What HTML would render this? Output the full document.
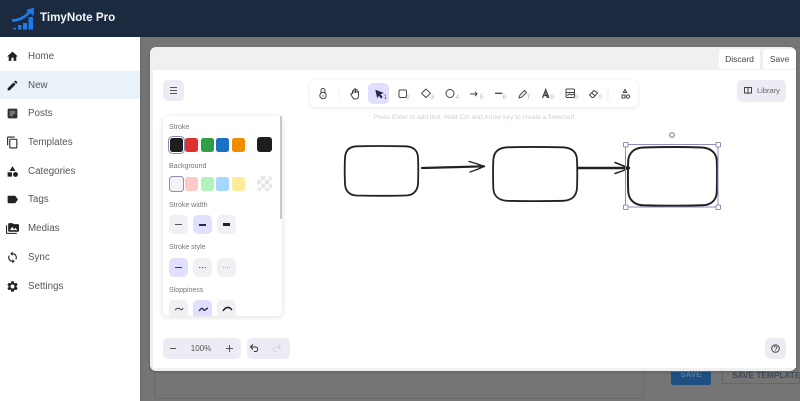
<!DOCTYPE html>
<html>
<head>
<meta charset="utf-8">
<style>
html,body{margin:0;padding:0;width:800px;height:401px;overflow:hidden;background:#757575;font-family:"Liberation Sans",sans-serif}
body{filter:blur(.3px)}
.a{position:absolute}
#hdr{left:0;top:0;width:800px;height:37px;background:#1c2a3f;z-index:5}
#hdr .t{position:absolute;left:40px;top:9px;font-size:11.6px;font-weight:bold;color:#f2f5f9;line-height:18px;white-space:nowrap}
#side{left:0;top:37px;width:140px;height:364px;background:#fff;z-index:4}
.nav{position:absolute;left:28px;font-size:9.8px;color:#555;line-height:14px}
.ic{position:absolute;left:6px;width:13px;height:13px}
#active{left:0;top:71px;width:140px;height:28px;background:#eaf2fa}
#modal{left:150px;top:47px;width:646px;height:324px;background:#f0f0f0;border-radius:6px;z-index:3;box-shadow:0 1px 3px rgba(0,0,0,.2)}
#canvas{left:153px;top:70px;width:643px;height:298px;background:#fff;z-index:3}
.btn{position:absolute;background:#fff;border-radius:3px;font-size:8.5px;color:#444;text-align:center;line-height:20px;height:20px;top:49px;z-index:4}
.g{position:absolute;background:#ececf4;border-radius:5px;z-index:4}
#toolbar{left:310px;top:80px;width:328px;height:27px;background:#fff;border-radius:6px;box-shadow:0 1px 5px rgba(0,0,0,.1);z-index:4}
#tsel{left:368px;top:83px;width:21px;height:21px;background:#e0dffe;border-radius:5px;z-index:5}
.s{position:absolute;z-index:6;overflow:visible}
.num{position:absolute;font-size:6.5px;color:#b8b8b8;z-index:6;line-height:8px;top:94px}
#hint{left:300px;top:113px;width:348px;text-align:center;font-size:6.6px;color:#cfcfcf;line-height:10px;z-index:4}
#panel{left:163px;top:116px;width:119px;height:200px;background:#fff;border-radius:5px;box-shadow:0 1px 6px rgba(0,0,0,.14);z-index:4;overflow:hidden}
.lbl{position:absolute;left:6px;font-size:7px;color:#777;line-height:10px}
.sw{position:absolute;width:13px;height:14px;border-radius:2.5px}
.bx{position:absolute;width:19px;height:19px;border-radius:5px;background:#f1f0f5}
.bx.on{background:#e0dffe}
.bx i{position:absolute;left:6px;top:9px;width:7px;height:1px;background:#555}
#thumb{left:280px;top:116px;width:2px;height:103px;background:#c8c8cc;z-index:5}
</style>
</head>
<body>
<!-- background page hints -->
<div class="a" style="left:154px;top:372px;width:488px;height:26px;border:1px solid #6a6a6a;border-top:none;z-index:1"></div>
<div class="a" style="left:671px;top:372px;width:40px;height:13px;background:#1f4f82;border-radius:0 0 2px 2px;z-index:1;color:#5b7ea3;font-size:8px;font-weight:bold;text-align:center;line-height:6px">SAVE</div>
<div class="a" style="left:722px;top:372px;width:78px;height:12px;border:1px solid #666;border-top:none;z-index:1;color:#3f4a55;font-size:8.300px;font-weight:bold;line-height:6px;white-space:nowrap;padding-left:9px;box-sizing:border-box;overflow:hidden">SAVE TEMPLATE</div>

<div id="hdr" class="a">
<svg class="a" style="left:11px;top:6px" width="24" height="25" viewBox="0 0 24 25">
<path d="M1 14.500C8 14.500 15 11 19 5" fill="none" stroke="#1e7ae8" stroke-width="2.800"/>
<path d="M15 4 L23 1.500 L22.500 10Z" fill="#1e7ae8"/>
<rect x="2" y="22" width="3" height="1.500" fill="#1e7ae8"/><rect x="7" y="19" width="3.500" height="4.500" fill="#1e7ae8"/><rect x="12" y="17" width="4" height="6.500" fill="#1e7ae8"/><rect x="17.500" y="11" width="4.500" height="12.500" fill="#1e7ae8"/>
</svg>
<div class="t">TimyNote Pro</div>
</div>

<div id="side" class="a" style="box-shadow:0 0 3px rgba(0,0,0,.2)"></div>
<div id="active" class="a" style="z-index:4"></div>
<div class="a" style="left:0;top:0;z-index:5">
<div class="nav" style="top:50px">Home</div>
<div class="nav" style="top:79px">New</div>
<div class="nav" style="top:107px">Posts</div>
<div class="nav" style="top:136px">Templates</div>
<div class="nav" style="top:165px">Categories</div>
<div class="nav" style="top:193px">Tags</div>
<div class="nav" style="top:222px">Medias</div>
<div class="nav" style="top:251px">Sync</div>
<div class="nav" style="top:280px">Settings</div>
<svg class="ic" style="top:50px" viewBox="0 0 24 24"><path fill="#222" d="M10 20v-6h4v6h5v-8h3L12 3 2 12h3v8z"/></svg>
<svg class="ic" style="top:79px" viewBox="0 0 24 24"><path fill="#222" d="M3 17.25V21h3.75L17.8 9.94l-3.75-3.75L3 17.25zM20.7 7.04a1 1 0 000-1.41l-2.34-2.34a1 1 0 00-1.41 0l-1.83 1.83 3.75 3.75 1.83-1.83z"/></svg>
<svg class="ic" style="top:107px" viewBox="0 0 24 24"><path fill="#333" d="M19 3H5a2 2 0 00-2 2v14a2 2 0 002 2h14a2 2 0 002-2V5a2 2 0 00-2-2z"/><path fill="#777" d="M7 7h10v6h-4v4H7z"/></svg>
<svg class="ic" style="top:136px" viewBox="0 0 24 24"><path fill="#222" d="M16 1H4a2 2 0 00-2 2v14h2V3h12V1zm3 4H8a2 2 0 00-2 2v14a2 2 0 002 2h11a2 2 0 002-2V7a2 2 0 00-2-2zm0 16H8V7h11v14z"/></svg>
<svg class="ic" style="top:165px" viewBox="0 0 24 24"><path fill="#222" d="M12 2l-5.500 9h11z"/><circle cx="17.500" cy="17.500" r="4.500" fill="#222"/><path fill="#222" d="M3 13.500h8v8H3z"/></svg>
<svg class="ic" style="top:193px" viewBox="0 0 24 24"><path fill="#222" d="M17.630 5.840A2 2 0 0016 5H5a2 2 0 00-2 2v10a2 2 0 002 2h11a2 2 0 001.630-.840L22 12z"/></svg>
<svg class="ic" style="top:222px" viewBox="0 0 24 24"><path fill="#222" d="M2 6H0v14a2 2 0 002 2h18v-2H2V6zm20-2h-8l-2-2H6a2 2 0 00-2 2v12a2 2 0 002 2h16a2 2 0 002-2V6a2 2 0 00-2-2zM7 15l4.500-6 3.500 4.500 2.500-3L21 15H7z"/></svg>
<svg class="ic" style="top:251px" viewBox="0 0 24 24"><path fill="#222" d="M12 4V1L8 5l4 4V6a6 6 0 016 6c0 1-.25 2-.7 2.800l1.460 1.460A8 8 0 0012 4zm0 14a6 6 0 01-6-6c0-1 .25-2 .7-2.800L5.240 7.740A8 8 0 0012 20v3l4-4-4-4v3z"/></svg>
<svg class="ic" style="top:280px" viewBox="0 0 24 24"><path fill="#222" d="M19.140 12.940a7.500 7.500 0 000-1.880l2.030-1.580a.5.5 0 00.12-.61l-1.920-3.320a.5.5 0 00-.59-.22l-2.390.96a7 7 0 00-1.620-.94l-.36-2.540a.5.5 0 00-.48-.41h-3.840a.5.5 0 00-.47.41l-.36 2.540a7 7 0 00-1.630.94l-2.390-.96a.5.5 0 00-.58.22L2.740 8.870a.5.5 0 00.12.61l2.030 1.580a7.500 7.500 0 000 1.880l-2.030 1.580a.5.5 0 00-.12.61l1.920 3.320c.12.22.37.29.59.22l2.390-.96c.5.38 1.030.7 1.620.94l.36 2.540c.05.24.24.41.48.41h3.840c.24 0 .44-.17.47-.41l.36-2.540a7 7 0 001.620-.94l2.390.96c.22.08.47 0 .59-.22l1.920-3.320a.5.5 0 00-.12-.61zM12 15.600a3.600 3.600 0 110-7.200 3.600 3.600 0 010 7.200z"/></svg>
</div>

<div id="modal" class="a"></div>
<div id="canvas" class="a"></div>
<div class="btn" style="left:719px;width:41px">Discard</div>
<div class="btn" style="left:763px;width:33px">Save</div>

<!-- menu -->
<div class="g" style="left:163px;top:80px;width:21px;height:21px"></div>
<svg class="s" style="left:163px;top:80px" width="21" height="21"><path d="M7 7.500h7M7 10.500h7M7 13.500h7" stroke="#555" stroke-width="1"/></svg>

<!-- toolbar -->
<div id="toolbar" class="a"></div>
<div id="tsel" class="a"></div>
<svg class="s" style="left:310px;top:80px" width="328" height="27" fill="none" stroke="#444" stroke-width="1">
<!-- lock -->
<circle cx="13" cy="15.500" r="3.200"/><path d="M11 12.500V10.500a2 2 0 014 0v2M13 15v1.500"/>
<path d="M29 8v12M298 8v12" stroke="#efefef"/>
<!-- hand -->
<path d="M42.500 14V11a.8.8 0 011.500 0v2M44 13V9.300a.8.8 0 011.500 0V13M45.500 13V9.800a.8.8 0 011.500 0v3.200M47 13v-1.500a.8.8 0 011.500 0V16c0 2-1.200 3-3 3s-2.500-.7-3.200-2L41 14.500c-.5-1 .7-1.600 1.500-.5" fill="#fff"/>
<!-- pointer -->
<path d="M66 10.500l6.500 2.500-2.700 1 2.200 3-1 .8-2.200-3-1.400 2.300z" fill="#2a2a4a" stroke="#2a2a4a"/>
<!-- rect -->
<rect x="89" y="10" width="7.500" height="7.500" rx="1.200"/>
<!-- diamond -->
<path d="M116 9l4.500 4.300-4.500 4.300-4.500-4.300z" stroke-linejoin="round"/>
<!-- circle -->
<circle cx="140" cy="13.500" r="4"/>
<!-- arrow -->
<path d="M160 14h7M165 11.800L167 14l-2 2.200"/>
<!-- line -->
<path d="M185 13.300h7.500" stroke-width="1.300"/>
<!-- pencil -->
<path d="M209 18l1-3 4.500-4.500 2 2-4.500 4.500z"/>
<!-- text A -->
<path d="M232.500 18l3.200-8.500L239 18M233.500 15.500h4.500M235 12l2.500 6" stroke-width="1.200"/>
<!-- image -->
<rect x="256" y="9" width="8.500" height="8.500" rx="1"/><path d="M256.500 12.500h7.500M257 15.500l2.500-1.500 2 1 2.500-1"/>
<!-- eraser -->
<path d="M282 17.500l-2.500-2.500 4.500-4.500 3.500 2.500-4 4.500zM281.500 12.800l3.500 3"/>
<!-- extra -->
<path d="M315 9.500l1.700 3h-3.400z"/><rect x="312" y="15" width="3" height="3"/><circle cx="318" cy="16.500" r="1.600"/>
</svg>
<div class="num" style="left:383.500px;color:#666">1</div>
<div class="num" style="left:406.500px">2</div>
<div class="num" style="left:430.500px">3</div>
<div class="num" style="left:455.500px">4</div>
<div class="num" style="left:479.500px">5</div>
<div class="num" style="left:502.500px">6</div>
<div class="num" style="left:526.500px">T</div>
<div class="num" style="left:550.500px">8</div>
<div class="num" style="left:574.500px">9</div>
<div class="num" style="left:598.500px">0</div>

<!-- library -->
<div class="g" style="left:737px;top:80px;width:49px;height:22px"></div>
<svg class="s" style="left:744px;top:87px" width="8" height="7" fill="none" stroke="#444" stroke-width="1"><path d="M.5 .5h3l.5.5.5-.5h3v5.500h-3l-.5.500-.5-.5h-3zM4 1v5"/></svg>
<div class="a" style="left:757px;top:86px;font-size:7.500px;color:#666;line-height:10px;z-index:6">Library</div>

<div id="hint" class="a">Press Enter to add text. Hold Ctrl and Arrow key to create a flowchart</div>

<!-- panel -->
<div id="panel" class="a">
<div class="lbl" style="top:7px">Stroke</div>
<div class="sw" style="left:6.500px;top:22px;background:#1e1e1e;box-shadow:0 0 0 1px #fff,0 0 0 2px #8f8cb8"></div>
<div class="sw" style="left:22px;top:22px;background:#e03131"></div>
<div class="sw" style="left:38px;top:22px;background:#2f9e44"></div>
<div class="sw" style="left:53px;top:22px;background:#1971c2"></div>
<div class="sw" style="left:69px;top:22px;background:#f08c00"></div>
<div class="sw" style="left:94px;top:21px;width:15px;height:15px;background:#1e1e1e;border-radius:3px"></div>
<div class="lbl" style="top:46px">Background</div>
<div class="sw" style="left:6.500px;top:61px;background:#f4f4f6;box-shadow:0 0 0 1px #8f8cb8"></div>
<div class="sw" style="left:22px;top:61px;background:#ffc9c9"></div>
<div class="sw" style="left:38px;top:61px;background:#b2f2bb"></div>
<div class="sw" style="left:53px;top:61px;background:#a5d8ff"></div>
<div class="sw" style="left:69px;top:61px;background:#ffec99"></div>
<div class="sw" style="left:94px;top:60px;width:15px;height:15px;border-radius:3px;background:repeating-conic-gradient(#e6e6e6 0 25%,#fafafa 0 50%) 0 0/8px 8px"></div>
<div class="lbl" style="top:85px">Stroke width</div>
<div class="bx" style="left:6px;top:99px"><i style="height:1px;left:6px;top:9px"></i></div>
<div class="bx on" style="left:30px;top:99px"><i style="height:2px;background:#2a2a4a"></i></div>
<div class="bx" style="left:54px;top:99px"><i style="height:3px;background:#222;top:8px"></i></div>
<div class="lbl" style="top:127px">Stroke style</div>
<div class="bx on" style="left:6px;top:142px"><i style="background:#3a3a5a"></i></div>
<div class="bx" style="left:30px;top:142px"><i style="background:repeating-linear-gradient(90deg,#666 0 1.500px,transparent 1.500px 3px)"></i></div>
<div class="bx" style="left:54px;top:142px"><i style="background:repeating-linear-gradient(90deg,#aaa 0 1px,transparent 1px 2px)"></i></div>
<div class="lbl" style="top:170px">Sloppiness</div>
<div class="bx" style="left:6px;top:184px"></div>
<div class="bx on" style="left:30px;top:184px"></div>
<div class="bx" style="left:54px;top:184px"></div>
<svg class="a" style="left:6px;top:184px" width="70" height="16" fill="none" stroke="#444" stroke-width="1">
<path d="M6 10q3-3 5-1t3-1"/><path d="M30 11q3-4 4-2t2 1 3-2" stroke="#26264a" stroke-width="1.300"/><path d="M54 11q3-5 7-3l2 2" stroke="#222" stroke-width="1.500"/>
</svg>
</div>
<div id="thumb" class="a"></div>

<!-- bottom -->
<div class="g" style="left:163px;top:338px;width:78px;height:21px"></div>
<div class="g" style="left:247px;top:338px;width:43px;height:21px"></div>
<div class="a" style="left:186px;top:344px;width:30px;text-align:center;font-size:8px;color:#555;line-height:10px;z-index:6">100%</div>
<svg class="s" style="left:163px;top:338px" width="127" height="21" fill="none" stroke="#555" stroke-width="1">
<path d="M7 10.500h6M63 10.500h7M66.500 7v7"/>
<path d="M90 6.500L87.500 9 90 11.500M87.500 9h5a2.200 2.200 0 010 4.500h-1.500" stroke="#333"/>
<path d="M115 6.500l2.500 2.500-2.500 2.500M117.500 9h-5a2.200 2.200 0 000 4.500h1.500" stroke="#d0d0d8"/>
</svg>
<div class="g" style="left:765px;top:338px;width:21px;height:21px"></div>
<svg class="s" style="left:765px;top:338px" width="21" height="21" fill="none" stroke="#444" stroke-width="1"><circle cx="10.500" cy="10.500" r="3.800"/><path d="M9.200 9.500a1.400 1.400 0 112 1.300c-.5.300-.7.500-.7 1M10.500 12.500v.6" stroke-width=".8"/></svg>

<!-- drawing -->
<svg class="s" style="left:0;top:0;z-index:6;pointer-events:none" width="800" height="401" fill="none" stroke="#222" stroke-linecap="round" stroke-linejoin="round">
<path d="M356 146.300C372 145.800 392 146 406 146.300C414 146.800 418 151 418 158C418.500 167 418.300 176 418 184C417.500 191 413 195.300 406 195.500C390 196 370 195.800 356 195.500C349 195 345.300 190.500 345 184C344.600 175 344.600 166 345 158C345.300 151 349 146.800 356 146.300Z" stroke-width="1.800"/>
<path d="M422 168C440 167.500 465 167 484 166.300" stroke-width="2.200"/>
<path d="M469 161.500C475 163 480 165 484.500 166.300C480 168.500 475 170.500 470 172" stroke-width="1.400"/>
<path d="M507 147.300C525 146.800 550 147 563 147.300C572 147.800 576.800 152 577 160C577.400 170 577.300 180 577 188C576.500 196 572 200.500 563 200.800C545 201.200 522 201.200 507 200.800C498 200.300 493.500 195.500 493.300 188C493 178 493 168 493.300 160C493.700 152 498 147.800 507 147.300Z" stroke-width="1.800"/>
<path d="M578 168C595 168 612 168 629 168" stroke-width="2.400"/>
<path d="M615 162.500C620 164.500 625 166.500 629 168C625 170 620 172 615 173.500" stroke-width="1.500"/>
<path d="M643 147.500C660 147 688 147 702 147.500C711 148 716.500 153 716.800 161C717.200 172 717 183 716.800 192C716.300 200.500 711 205 702 205.300C685 205.800 660 205.800 643 205.300C634 204.800 628.500 199.500 628.200 191C627.800 180 627.800 170 628.200 161C628.600 153 634 148 643 147.500Z" stroke-width="2"/>
<g stroke="#8f8cc0" stroke-width="1" stroke-linecap="butt">
<rect x="625.500" y="144.500" width="92.500" height="62.500"/>
<g fill="#fff"><rect x="623.500" y="142.500" width="4.500" height="4.500" rx="1"/><rect x="716" y="142.500" width="4.500" height="4.500" rx="1"/><rect x="623.500" y="205" width="4.500" height="4.500" rx="1"/><rect x="716" y="205" width="4.500" height="4.500" rx="1"/></g>
</g>
<circle cx="672" cy="135" r="2.300" stroke="#777" fill="#fff" stroke-width="1"/>
</svg>
</body>
</html>
